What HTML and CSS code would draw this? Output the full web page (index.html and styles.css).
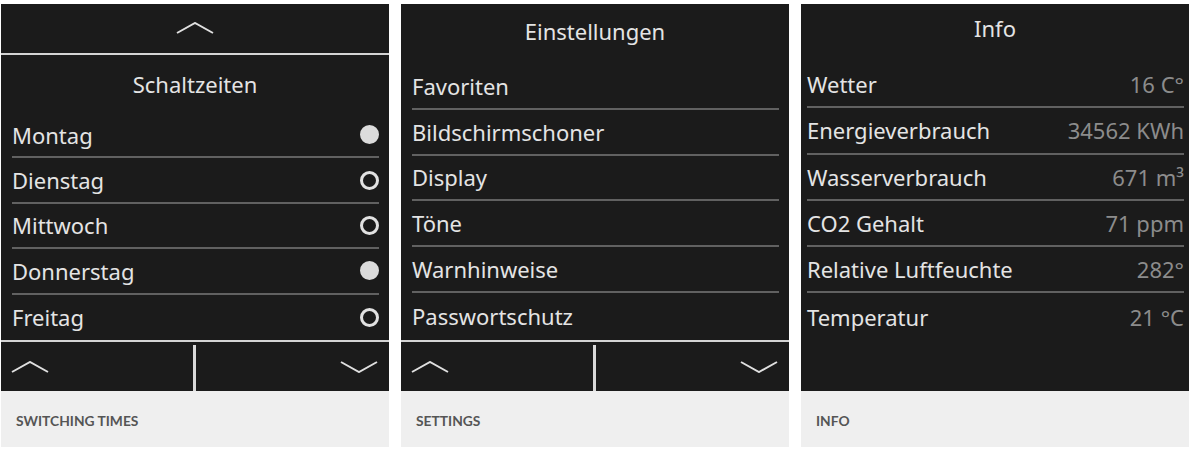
FILE: index.html
```html
<!DOCTYPE html>
<html lang="de">
<head>
    <meta charset="UTF-8">
    <meta name="viewport" content="width=device-width, initial-scale=1.0">
    <title>Bedienpanel Ansichten</title>
    <link rel="stylesheet" href="styles.css">
</head>
<body>
    <div class="panels">
        <!-- Schaltzeiten -->
        <section class="panel">
            <div class="screen">
                <div class="screen-top">
                    <svg class="chevron" viewBox="0 0 38 12"><polyline points="1,11 19,1 37,11"/></svg>
                </div>
                <div class="screen-title title-days">Schaltzeiten</div>
                <ul class="list list-days">
                    <li class="row"><span>Montag</span><span class="dot on"></span></li>
                    <li class="row"><span>Dienstag</span><span class="dot"></span></li>
                    <li class="row"><span>Mittwoch</span><span class="dot"></span></li>
                    <li class="row"><span>Donnerstag</span><span class="dot on"></span></li>
                    <li class="row"><span>Freitag</span><span class="dot"></span></li>
                </ul>
                <div class="screen-nav">
                    <svg class="chevron" viewBox="0 0 38 12"><polyline points="1,11 19,1 37,11"/></svg>
                    <span class="nav-divider"></span>
                    <svg class="chevron" viewBox="0 0 38 12"><polyline points="1,1 19,11 37,1"/></svg>
                </div>
            </div>
            <div class="caption">Switching times</div>
        </section>

        <!-- Einstellungen -->
        <section class="panel">
            <div class="screen">
                <div class="screen-title title-settings">Einstellungen</div>
                <ul class="list list-settings">
                    <li class="row"><span>Favoriten</span></li>
                    <li class="row"><span>Bildschirmschoner</span></li>
                    <li class="row"><span>Display</span></li>
                    <li class="row"><span>Töne</span></li>
                    <li class="row"><span>Warnhinweise</span></li>
                    <li class="row"><span>Passwortschutz</span></li>
                </ul>
                <div class="screen-nav">
                    <svg class="chevron" viewBox="0 0 38 12"><polyline points="1,11 19,1 37,11"/></svg>
                    <span class="nav-divider"></span>
                    <svg class="chevron" viewBox="0 0 38 12"><polyline points="1,1 19,11 37,1"/></svg>
                </div>
            </div>
            <div class="caption">Settings</div>
        </section>

        <!-- Info -->
        <section class="panel">
            <div class="screen">
                <div class="screen-title title-info">Info</div>
                <ul class="list list-info">
                    <li class="row"><span>Wetter</span><span class="value">16 C°</span></li>
                    <li class="row"><span>Energieverbrauch</span><span class="value">34562 KWh</span></li>
                    <li class="row"><span>Wasserverbrauch</span><span class="value">671 m³</span></li>
                    <li class="row"><span>CO2 Gehalt</span><span class="value">71 ppm</span></li>
                    <li class="row"><span>Relative Luftfeuchte</span><span class="value">282°</span></li>
                    <li class="row"><span>Temperatur</span><span class="value">21 °C</span></li>
                </ul>
            </div>
            <div class="caption">Info</div>
        </section>
    </div>
</body>
</html>
```

FILE: styles.css
```css
body {
    margin: 0;
    background: #fff;
    font-family: 'Noto Sans', 'Open Sans', sans-serif;
}

.panels {
    display: grid;
    grid-template-columns: repeat(3, 388px);
    gap: 12px;
    padding: 4px 0 0 1px;
}

.screen {
    height: 387px;
    background: #1b1b1b;
    color: #e4e4e4;
    display: flex;
    flex-direction: column;
    font-size: 22px;
}

.screen-top {
    height: 51px;
    flex-shrink: 0;
    border-bottom: 2px solid #d4d4d4;
    display: flex;
    justify-content: center;
    align-items: center;
    padding-bottom: 1px;
    box-sizing: border-box;
}

.chevron {
    width: 38px;
    height: 12px;
    fill: none;
    stroke: #e0e0e0;
    stroke-width: 2;
}

.screen-title {
    flex-shrink: 0;
    text-align: center;
    line-height: 30px;
    box-sizing: border-box;
}

.title-days {
    height: 58px;
    padding-top: 14px;
}

.title-settings {
    height: 60px;
    padding-top: 12px;
}

.title-info {
    height: 58px;
    padding-top: 9px;
}

.list {
    list-style: none;
    margin: 0;
    padding: 0 10px 0 11px;
}

.row {
    height: 46px;
    box-sizing: border-box;
    border-bottom: 2px solid #616161;
    display: flex;
    justify-content: space-between;
    align-items: center;
    line-height: 30px;
}

.row:last-child {
    border-bottom: none;
}

.list-days .row {
    height: 45.4px;
}

.list-settings .row {
    height: 45.75px;
}

.list-info {
    padding: 0 5px 0 6px;
}

.list-info .row {
    height: 46.3px;
}

.dot {
    width: 19px;
    height: 19px;
    border-radius: 50%;
    border: 3px solid #e2e2e2;
    box-sizing: border-box;
}

.dot.on {
    background: #dcdcdc;
    border-color: #dcdcdc;
}

.value {
    color: #8c8c8c;
}

.screen-nav {
    margin-top: auto;
    height: 51px;
    flex-shrink: 0;
    box-sizing: border-box;
    border-top: 2px solid #d4d4d4;
    display: flex;
    justify-content: space-between;
    align-items: center;
    padding: 0 11px 0 10px;
}

.nav-divider {
    width: 3px;
    align-self: stretch;
    margin-top: 3px;
    background: #dadada;
}

.caption {
    height: 56px;
    background: #efefef;
    color: #555;
    font-family: 'Lato', 'Liberation Sans', sans-serif;
    font-weight: 700;
    font-size: 13.8px;
    text-transform: uppercase;
    display: flex;
    align-items: center;
    padding: 3px 0 0 15px;
    box-sizing: border-box;
}
```
